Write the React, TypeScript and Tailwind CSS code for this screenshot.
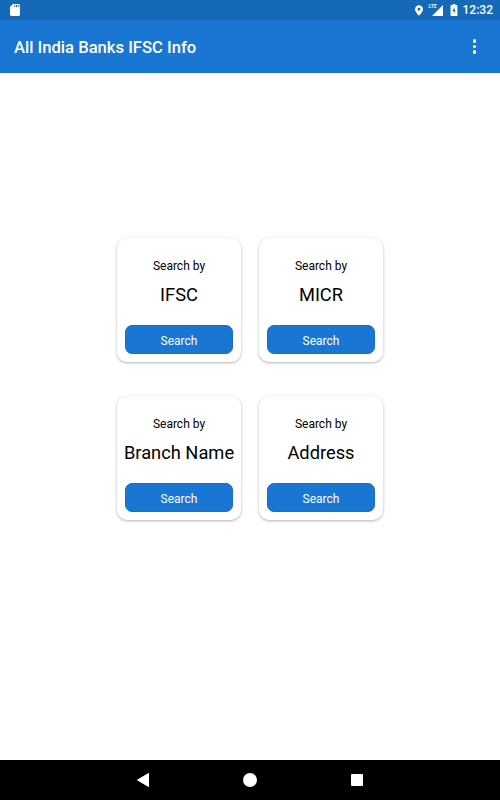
function SearchCard({ title }: { title: string }) {
  return (
    <div className="w-[124px] h-[124px] rounded-[10px] bg-white shadow-[0_1px_3px_rgba(0,0,0,0.3)] flex flex-col items-center px-2 pt-[20px] pb-[8px]">
      <span className="text-[12px] leading-[16px] text-black">Search by</span>
      <span className="text-[18.3px] leading-[24px] mt-[8.5px] text-black whitespace-nowrap">{title}</span>
      <button className="mt-auto w-full h-[29px] pt-[2px] rounded-[7px] bg-[#1976d2] border border-[#1a6ec4] text-white text-[12px] leading-none">Search</button>
    </div>
  );
}

export default function App() {
  return (
    <div className="w-[500px] h-[800px] flex flex-col bg-white overflow-hidden antialiased font-[Roboto,sans-serif]">
      <div className="h-[20px] bg-[#1669b9] flex items-center justify-between pl-[10px] pr-[7px]">
        <svg width="10" height="12" viewBox="0 0 10 12">
          <path d="M3 0H8.5C9.3 0 10 .7 10 1.5V10.5C10 11.3 9.3 12 8.5 12H1.5C.7 12 0 11.3 0 10.5V3Z" fill="#fff" />
          <rect x="4.2" y="1" width="1" height="2" fill="#1669b9" />
          <rect x="6" y="1" width="1" height="2" fill="#1669b9" />
          <rect x="7.8" y="1" width="1" height="2" fill="#1669b9" />
        </svg>
        <div className="flex items-center">
          <svg width="8" height="11" viewBox="0 0 10 13" className="mr-[9px]">
            <path fillRule="evenodd" d="M5 0C2.2 0 0 2.2 0 5C0 8.6 5 13 5 13S10 8.6 10 5C10 2.2 7.8 0 5 0ZM5 3.2A1.8 1.8 0 1 1 5 6.8A1.8 1.8 0 1 1 5 3.2Z" fill="#fff" />
          </svg>
          <div className="relative w-[11px] h-[11px] mr-[7px]">
            <svg width="11" height="11" viewBox="0 0 14 14" className="absolute left-0 top-0">
              <path d="M14 0V14H0Z" fill="#fff" />
            </svg>
            <span className="absolute left-[-3px] top-[-2px] text-[5px] leading-[7px] font-bold text-white/90">LTE</span>
          </div>
          <svg width="8" height="12" viewBox="0 0 8 14" className="mr-[5px]">
            <path fillRule="evenodd" d="M2.5 0H5.5V1.2H7.2C7.6 1.2 8 1.6 8 2V13.2C8 13.6 7.6 14 7.2 14H.8C.4 14 0 13.6 0 13.2V2C0 1.6 .4 1.2 .8 1.2H2.5ZM4.6 3.6L2.2 8.2H3.7V11.4L5.9 6.9H4.5Z" fill="#fff" />
          </svg>
          <span className="text-[12px] leading-[20px] font-medium text-white">12:32</span>
        </div>
      </div>
      <div className="h-[53px] bg-[#1976d2] flex items-center justify-between pl-[14px] pr-[24px]">
        <span className="text-[16.6px] mt-[4px] font-medium text-white">All India Banks IFSC Info</span>
        <div className="flex flex-col gap-[2px]">
          <span className="w-[3.5px] h-[3.5px] rounded-full bg-white" />
          <span className="w-[3.5px] h-[3.5px] rounded-full bg-white" />
          <span className="w-[3.5px] h-[3.5px] rounded-full bg-white" />
        </div>
      </div>
      <div className="flex-1 flex items-center justify-center pb-[75px]">
        <div className="grid grid-cols-[124px_124px] gap-x-[18px] gap-y-[34px]">
          <SearchCard title="IFSC" />
          <SearchCard title="MICR" />
          <SearchCard title="Branch Name" />
          <SearchCard title="Address" />
        </div>
      </div>
      <div className="h-[40px] bg-black flex items-center justify-center">
        <div className="w-[226px] flex items-center justify-between">
          <svg width="12" height="14" viewBox="0 0 12 14">
            <path d="M11.5 .5V13.5L.5 7Z" fill="#fff" stroke="#fff" strokeLinejoin="round" />
          </svg>
          <span className="w-[14px] h-[14px] rounded-full bg-white" />
          <span className="w-[12px] h-[12px] rounded-[1px] bg-white" />
        </div>
      </div>
    </div>
  );
}
